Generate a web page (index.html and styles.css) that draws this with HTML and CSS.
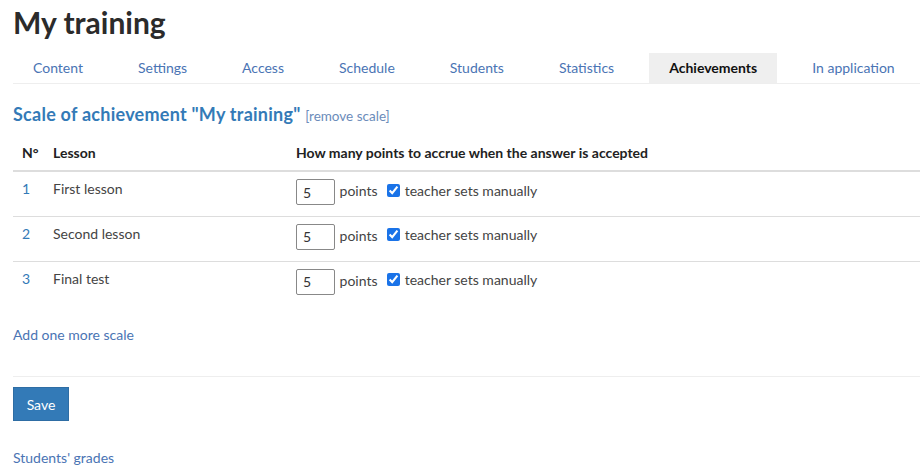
FILE: index.html
```html
<!DOCTYPE html>
<html lang="en">
<head>
  <meta charset="UTF-8" />
  <title>My training</title>
  <link rel="stylesheet" href="styles.css">
</head>
<body>
  <div class="page">
    <h1 class="title">My training</h1>

    <!-- TABS -->
    <nav class="tabs">
      <a class="tab" href="#">Content</a>
      <a class="tab" href="#">Settings</a>
      <a class="tab" href="#">Access</a>
      <a class="tab" href="#">Schedule</a>
      <a class="tab" href="#">Students</a>
      <a class="tab" href="#">Statistics</a>
      <a class="tab active" href="#">Achievements</a>
      <a class="tab" href="#">In application</a>
    </nav>

    <!-- SCALE -->
    <h2 class="scale-title">Scale of achievement "My training" <a class="remove" href="#">[remove scale]</a></h2>

    <table class="scale">
      <thead>
        <tr>
          <th class="num">N°</th>
          <th class="lesson">Lesson</th>
          <th>How many points to accrue when the answer is accepted</th>
        </tr>
      </thead>
      <tbody>
        <tr>
          <td class="num">1</td>
          <td class="lesson">First lesson</td>
          <td><input class="points" type="text" value="5"> points <label class="manual"><input type="checkbox" checked> teacher sets manually</label></td>
        </tr>
        <tr>
          <td class="num">2</td>
          <td class="lesson">Second lesson</td>
          <td><input class="points" type="text" value="5"> points <label class="manual"><input type="checkbox" checked> teacher sets manually</label></td>
        </tr>
        <tr>
          <td class="num">3</td>
          <td class="lesson">Final test</td>
          <td><input class="points" type="text" value="5"> points <label class="manual"><input type="checkbox" checked> teacher sets manually</label></td>
        </tr>
      </tbody>
    </table>

    <a class="add-scale" href="#">Add one more scale</a>

    <div class="actions">
      <button class="btn-save">Save</button>
    </div>

    <a class="grades" href="#">Students' grades</a>
  </div>
</body>
</html>
```

FILE: styles.css
```css
:root {
  --link: #4a74b4;
  --blue: #337ab7;
  --text: #333;
  --line: #ddd;
}
* {
  box-sizing: border-box;
}
body {
  margin: 0;
  font-family: 'Lato', 'Open Sans', sans-serif;
  font-size: 14px;
  color: var(--text);
  background: #fff;
  overflow: hidden;
}
a {
  color: var(--link);
  text-decoration: none;
}
.page {
  padding: 0 0 0 13px;
  width: 933px;
}
.title {
  margin: 0;
  padding-top: 3px;
  font-size: 30px;
  line-height: 38px;
  font-weight: 700;
  color: #2b2b2b;
}

/* TABS */
.tabs {
  display: flex;
  gap: 15px;
  margin-top: 12px;
  border-bottom: 1px solid #eee;
}
.tab {
  padding: 0 20px;
  height: 30px;
  line-height: 30px;
  font-size: 14px;
  color: var(--link);
}
.tab.active {
  background: #efefef;
  color: #111;
  font-weight: 700;
}

/* SCALE */
.scale-title {
  margin: 19px 0 0;
  font-size: 18px;
  letter-spacing: 0.25px;
  line-height: 22px;
  font-weight: 700;
  color: var(--blue);
}
.remove {
  font-size: 13.5px;
  letter-spacing: 0;
  font-weight: 400;
  color: #6b8cba;
}
.scale {
  width: 100%;
  margin-top: 12px;
  border-collapse: collapse;
}
.scale th {
  text-align: left;
  font-weight: 700;
  padding: 5px 8px 9px;
  border-bottom: 2px solid var(--line);
  color: #222;
}
.scale td {
  padding: 0 8px;
  height: 45px;
  border-top: 1px solid var(--line);
  vertical-align: top;
  padding-top: 8px;
}
.scale tbody tr:first-child td {
  border-top: none;
}
.scale th.num, .scale td.num {
  width: 32px;
  padding-left: 9px;
  padding-right: 0;
}
.scale td.num {
  color: var(--blue);
}
.scale th.lesson, .scale td.lesson {
  width: 243px;
}
.scale td.lesson {
  color: #444;
}
.points {
  width: 39px;
  height: 26px;
  border: 1px solid #888;
  border-radius: 2px;
  padding: 0 6px;
  font: inherit;
  font-size: 14px;
  color: #333;
  vertical-align: middle;
  margin: 0 1px 0 0;
}
.manual {
  margin-left: 6px;
  color: #444;
}
.manual input {
  width: 13px;
  height: 13px;
  margin: 0 1px 0 0;
  vertical-align: -1px;
  accent-color: #1a73e8;
}
.scale td:last-child {
  padding-top: 7px;
  color: #444;
}

.add-scale {
  display: block;
  margin-top: 19px;
  line-height: 20px;
}
.actions {
  margin-top: 31px;
  border-top: 1px solid #eee;
  padding-top: 10px;
}
.btn-save {
  background: var(--blue);
  border: 1px solid #2e6da4;
  color: #fff;
  font: inherit;
  font-size: 14px;
  width: 56px;
  height: 34px;
  cursor: pointer;
}
.grades {
  display: block;
  margin-top: 27px;
  line-height: 20px;
}
```
